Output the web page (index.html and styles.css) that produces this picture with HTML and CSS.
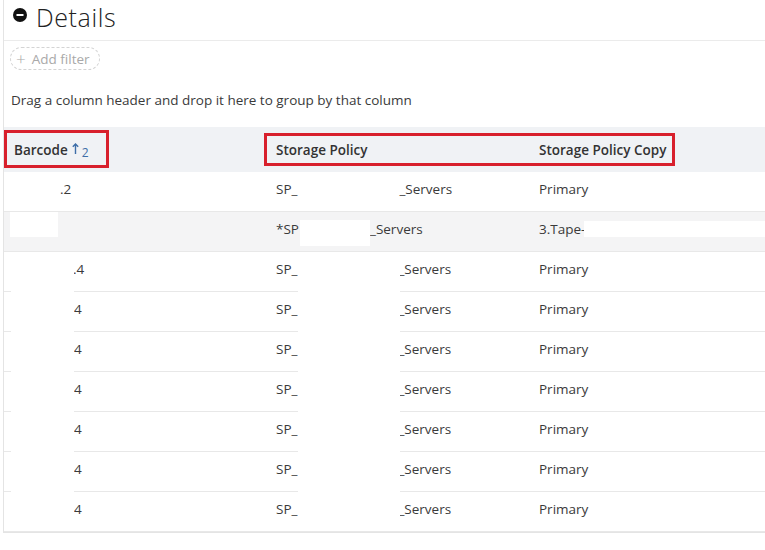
FILE: index.html
```html
<!DOCTYPE html>
<html lang="en">

<head>
    <meta charset="UTF-8">
    <meta name="viewport" content="width=device-width, initial-scale=1.0">
    <title>Details</title>
    <link rel="stylesheet" href="styles.css">
</head>

<body>
    <div class="panel">
        <!-- Collapsible section title -->
        <div class="panel-title">
            <svg class="collapse-icon" width="14" height="14" viewBox="0 0 14 14">
                <circle cx="7" cy="7" r="7" fill="#111"></circle>
                <rect x="3.5" y="6" width="7" height="2" fill="#fff"></rect>
            </svg>
            <h1>Details</h1>
        </div>

        <!-- Filters -->
        <div class="filter-bar">
            <span class="add-filter"><span class="plus">+</span>Add filter</span>
        </div>

        <div class="group-panel">Drag a column header and drop it here to group by that column</div>

        <!-- Grid -->
        <div class="grid">
            <div class="grid-header">
                <div class="th">Barcode
                    <svg class="sort-arrow" width="7" height="11" viewBox="0 0 7 11">
                        <path d="M3.5 1 V11 M0.8 3.8 L3.5 1 L6.2 3.8" fill="none" stroke="#3d6ea8" stroke-width="1.4"></path>
                    </svg>
                    <span class="sort-index">2</span>
                </div>
                <div class="th">Storage Policy</div>
                <div class="th">Storage Policy Copy</div>
            </div>

            <div class="grid-row">
                <div class="td"><span class="gap gap-bc1"></span>.2</div>
                <div class="td">SP_<span class="gap gap-sp1"></span>_Servers</div>
                <div class="td">Primary</div>
            </div>
            <div class="grid-row alt">
                <div class="td"></div>
                <div class="td">*SP<span class="gap gap-sp2"></span>_Servers</div>
                <div class="td">3.Tape-</div>
            </div>
            <div class="grid-row">
                <div class="td"><span class="gap gap-bc"></span>.4</div>
                <div class="td">SP_<span class="gap gap-sp"></span>_Servers</div>
                <div class="td">Primary</div>
            </div>
            <div class="grid-row">
                <div class="td"><span class="gap gap-bc4"></span>4</div>
                <div class="td">SP_<span class="gap gap-sp"></span>_Servers</div>
                <div class="td">Primary</div>
            </div>
            <div class="grid-row">
                <div class="td"><span class="gap gap-bc4"></span>4</div>
                <div class="td">SP_<span class="gap gap-sp"></span>_Servers</div>
                <div class="td">Primary</div>
            </div>
            <div class="grid-row">
                <div class="td"><span class="gap gap-bc4"></span>4</div>
                <div class="td">SP_<span class="gap gap-sp"></span>_Servers</div>
                <div class="td">Primary</div>
            </div>
            <div class="grid-row">
                <div class="td"><span class="gap gap-bc4"></span>4</div>
                <div class="td">SP_<span class="gap gap-sp"></span>_Servers</div>
                <div class="td">Primary</div>
            </div>
            <div class="grid-row">
                <div class="td"><span class="gap gap-bc4"></span>4</div>
                <div class="td">SP_<span class="gap gap-sp"></span>_Servers</div>
                <div class="td">Primary</div>
            </div>
            <div class="grid-row">
                <div class="td"><span class="gap gap-bc4"></span>4</div>
                <div class="td">SP_<span class="gap gap-sp"></span>_Servers</div>
                <div class="td">Primary</div>
            </div>

            <!-- blanked-out values -->
            <div class="blank blank-bc2"></div>
            <div class="blank blank-sp2"></div>
            <div class="blank blank-copy2"></div>
            <div class="blank blank-bc"></div>
            <div class="blank blank-sp"></div>

            <!-- highlighted headers -->
            <div class="mark mark-barcode"></div>
            <div class="mark mark-policy"></div>
        </div>
    </div>
</body>

</html>
```

FILE: styles.css
```css
/* Basic Reset */
* {
    margin: 0;
    padding: 0;
    box-sizing: border-box;
}

body {
    font-family: "Open Sans", Arial, sans-serif;
    font-size: 13.5px;
    color: #3a3a3a;
    background-color: #fff;
    width: 765px;
    height: 550px;
    overflow: hidden;
}

/* Section panel */
.panel {
    margin-left: 3px;
    border-left: 1px solid #e4e4e4;
    border-bottom: 1px solid #e4e4e4;
}

.panel-title {
    height: 41px;
    display: flex;
    align-items: flex-start;
    gap: 9px;
    padding-left: 9px;
    border-bottom: 1px solid #ebebeb;
}

.collapse-icon {
    margin-top: 8px;
}

.panel-title h1 {
    font-size: 25px;
    line-height: 34px;
    font-weight: 300;
    color: #222;
    letter-spacing: 0.6px;
}

/* Filter bar */
.filter-bar {
    padding: 6px 0 0 6px;
    height: 39px;
}

.add-filter {
    display: inline-flex;
    align-items: center;
    height: 23px;
    padding: 0 9px 0 5px;
    border: 1px dashed #d4d4d4;
    border-radius: 12px;
    color: #a9a9a9;
}

.add-filter .plus {
    font-size: 17px;
    font-weight: 300;
    margin-right: 6px;
    line-height: 1;
}

.group-panel {
    height: 47px;
    padding-left: 7px;
    padding-bottom: 7px;
    display: flex;
    align-items: center;
}

/* Grid */
.grid {
    position: relative;
}

.grid-header,
.grid-row {
    display: grid;
    grid-template-columns: 258px 263px 1fr;
}

.grid-header {
    height: 45px;
    background-color: #f0f2f5;
}

.th {
    display: flex;
    align-items: center;
    padding-left: 10px;
    font-weight: 600;
    color: #333;
    white-space: nowrap;
}

.grid-header .th + .th {
    padding-left: 14px;
}

.sort-arrow {
    margin-left: 4px;
    margin-bottom: 2px;
}

.sort-index {
    margin-left: 3px;
    margin-top: 5px;
    font-size: 12px;
    font-weight: 400;
    color: #3d6ea8;
}

.grid-row {
    height: 40px;
    border-bottom: 1px solid #e8e8e8;
}

.grid-row:last-child {
    border-bottom: none;
}

.grid-row.alt {
    background-color: #f4f4f5;
}

.td {
    display: flex;
    align-items: center;
    padding-left: 10px;
    padding-bottom: 5px;
    white-space: nowrap;
}

.td + .td {
    padding-left: 14px;
}

.gap {
    display: inline-block;
}

.gap-bc1 { width: 46px; }
.gap-bc { width: 59px; }
.gap-bc4 { width: 60px; }
.gap-sp1 { width: 102px; }
.gap-sp { width: 101px; }
.gap-sp2 { width: 71px; }

/* White boxes hiding values */
.blank {
    position: absolute;
    background-color: #fff;
}

.blank-bc2 { left: 6px; top: 85px; width: 48px; height: 25px; }
.blank-sp2 { left: 296px; top: 93px; width: 70px; height: 26px; }
.blank-copy2 { left: 580px; top: 94px; width: 190px; height: 16px; }
.blank-bc { left: 7px; top: 125px; width: 63px; height: 279px; }
.blank-sp { left: 294px; top: 125px; width: 102px; height: 279px; }

/* Red highlight frames */
.mark {
    position: absolute;
    border: 3px solid #d8202c;
}

.mark-barcode { left: 0; top: 3px; width: 105px; height: 38px; }
.mark-policy { left: 260px; top: 6px; width: 411px; height: 33px; }
```
